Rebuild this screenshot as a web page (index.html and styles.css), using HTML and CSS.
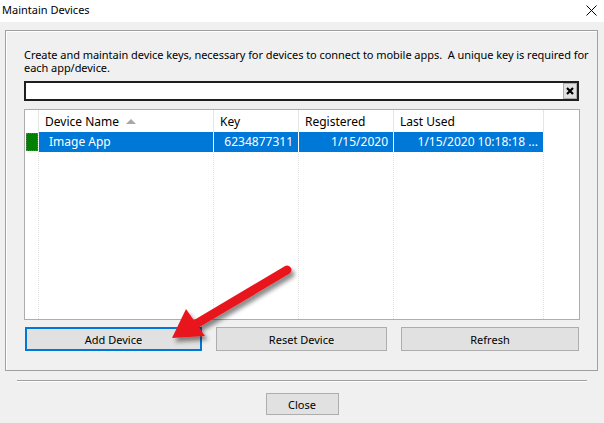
FILE: index.html
```html
<!DOCTYPE html>
<html lang="en">
<head>
  <meta charset="UTF-8">
  <title>Maintain Devices</title>
  <link rel="stylesheet" href="styles.css">
</head>
<body>

<div class="window">
  <div class="titlebar">
    <span class="title">Maintain Devices</span>
    <svg class="winclose" width="11" height="11" viewBox="0 0 11 11">
      <path d="M0.5 0.5 L10.5 10.5 M10.5 0.5 L0.5 10.5" stroke="#000" stroke-width="1" fill="none"/>
    </svg>
  </div>

  <div class="client">
    <div class="groupbox">
      <p class="intro">Create and maintain device keys, necessary for devices to connect to mobile apps.&nbsp; A unique key is required for each app/device.</p>

      <div class="search">
        <input type="text" class="search-box" value="">
        <span class="clear-btn">
          <svg width="8" height="8" viewBox="0 0 8 8">
            <path d="M1 1 L7 7 M7 1 L1 7" stroke="#000" stroke-width="2.2" fill="none"/>
          </svg>
        </span>
      </div>

      <div class="listview">
        <div class="lv-header">
          <div class="hcell"></div>
          <div class="hcell">Device Name <span class="sort"></span></div>
          <div class="hcell">Key</div>
          <div class="hcell">Registered</div>
          <div class="hcell">Last Used</div>
          <div class="hcell last"></div>
        </div>
        <div class="lv-body">
          <div class="cell state"><span class="flag"></span></div>
          <div class="cell sel">Image App</div>
          <div class="cell sel right">6234877311</div>
          <div class="cell sel right">1/15/2020</div>
          <div class="cell sel right">1/15/2020 10:18:18 ...</div>
          <div class="cell last"></div>

          <div class="fill"></div>
          <div class="fill"></div>
          <div class="fill"></div>
          <div class="fill"></div>
          <div class="fill"></div>
          <div class="fill last"></div>
        </div>
      </div>

      <div class="buttons">
        <button class="btn default">Add Device</button>
        <button class="btn">Reset Device</button>
        <button class="btn">Refresh</button>
      </div>
    </div>

    <div class="separator"></div>

    <div class="footer">
      <button class="btn close">Close</button>
    </div>
  </div>

  <!-- annotation arrow drawn over the dialog -->
  <svg class="arrow" width="604" height="423" viewBox="0 0 604 423">
    <defs>
      <filter id="shadow" x="-20%" y="-20%" width="140%" height="140%">
        <feDropShadow dx="3" dy="4" stdDeviation="2.2" flood-color="#000" flood-opacity="0.45"/>
      </filter>
    </defs>
    <g filter="url(#shadow)">
      <line x1="287" y1="270" x2="196" y2="324" stroke="#e8191c" stroke-width="9" stroke-linecap="round"/>
      <polygon points="172,338 186,309 205,336" fill="#e8191c"/>
    </g>
  </svg>
</div>

</body>
</html>
```

FILE: styles.css
```css
/* dialog */

* {
    box-sizing: border-box;
}

body {
    margin: 0;
    background: #f0f0f0;
    font-family: "Noto Sans", "DejaVu Sans", sans-serif;
    font-size: 11px;
    color: #000;
}

.window {
    position: relative;
    width: 604px;
    height: 423px;
    overflow: hidden;
    background: #f0f0f0;
}

.titlebar {
    height: 22px;
    background: #fff;
    display: flex;
    align-items: center;
    justify-content: space-between;
    padding: 0 7px 3px 2px;
}

.title {
    font-size: 11px;
}

.winclose {
    margin-top: 1px;
}

/* group box */

.groupbox {
    margin: 8px 0 0 5px;
    width: 593px;
    height: 341px;
    border: 1px solid #a0a0a0;
    box-shadow: inset 1px 1px 0 #fff;
    padding: 17px 0 0 18px;
}

.intro {
    margin: 0;
    width: 572px;
    line-height: 13px;
    letter-spacing: -0.05px;
}

.search {
    position: relative;
    margin-top: 7px;
    width: 555px;
    height: 20px;
}

.search-box {
    display: block;
    width: 100%;
    height: 20px;
    margin: 0;
    border: 2px solid #1e1e1e;
    background: #fff;
    outline: none;
}

.clear-btn {
    position: absolute;
    top: 2px;
    right: 2px;
    width: 14px;
    height: 16px;
    background: #e1e1e1;
    border: 1px solid #adadad;
    display: flex;
    align-items: center;
    justify-content: center;
}

/* list view */

.listview {
    margin-top: 8px;
    width: 556px;
    height: 211px;
    border: 1px solid #adadad;
    background: #fff;
    display: flex;
    flex-direction: column;
    font-size: 12px;
}

.lv-header,
.lv-body {
    display: grid;
    grid-template-columns: 14px 175px 85px 95px 150px 1fr;
}

.lv-header {
    height: 22px;
}

.hcell {
    border-right: 1px solid #e5e5e5;
    padding: 3px 0 0 6px;
    white-space: nowrap;
}

.hcell.last,
.cell.last,
.fill.last {
    border-right: none;
}

.sort {
    display: inline-block;
    margin-left: 4px;
    vertical-align: 2px;
    border-left: 5px solid transparent;
    border-right: 5px solid transparent;
    border-bottom: 5px solid #a8a8a8;
}

.lv-body {
    flex: 1;
    grid-template-rows: 20px 1fr;
}

.cell {
    border-right: 1px solid #fff;
    padding: 1px 5px 0 10px;
    white-space: nowrap;
    overflow: hidden;
}

.cell.sel {
    background: #0078d7;
    color: #fff;
}

.cell.right {
    text-align: right;
}

.cell.state {
    padding: 1px 0 1px 1px;
    border-right: 1px dotted #e3e3e3;
}

.flag {
    display: block;
    width: 12px;
    height: 18px;
    background: #008000;
    border: 1px dotted #4a8a4a;
}

.fill {
    border-right: 1px dotted #e3e3e3;
}

/* buttons */

.buttons {
    margin-top: 7px;
    margin-left: 1px;
    display: grid;
    grid-template-columns: 177px 171px 178px;
    column-gap: 14px;
}

.btn {
    height: 24px;
    margin: 0;
    padding: 0;
    background: #e1e1e1;
    border: 1px solid #adadad;
    font-family: inherit;
    font-size: 11px;
    color: #000;
}

.btn.default {
    border: 2px solid #0078d7;
}

.separator {
    margin: 9px 17px 0 17px;
    height: 2px;
    border-top: 1px solid #a0a0a0;
    border-bottom: 1px solid #fff;
}

.footer {
    display: flex;
    justify-content: center;
    margin-top: 11px;
}

.btn.close {
    width: 73px;
    height: 22px;
}

.arrow {
    position: absolute;
    left: 0;
    top: 0;
    pointer-events: none;
}
```
